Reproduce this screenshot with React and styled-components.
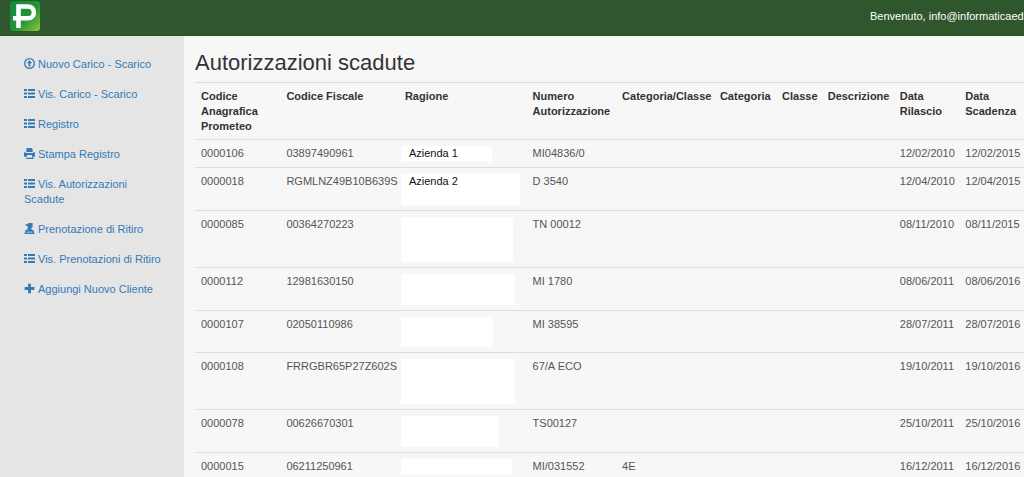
import React from 'react';
import styled, { createGlobalStyle } from 'styled-components';

const GlobalStyle = createGlobalStyle`
  * {
    box-sizing: border-box;
  }
  body {
    margin: 0;
    background: #f7f7f7;
    color: #555;
    font-family: Arial, "Liberation Sans", sans-serif;
    font-size: 11px;
    line-height: 15px;
    overflow: hidden;
  }
`

const Page = styled.div`
  display: flex;
  flex-direction: column;
  min-height: 100vh;
`

const TopBar = styled.header`
  display: flex;
  align-items: center;
  justify-content: space-between;
  height: 36px;
  padding: 0 0 3px 9px;
  background: #30562d;
  border-bottom: 1px solid #2b4d26;
`

const LogoLink = styled.a`
  display: flex;
`

const Greeting = styled.span`
  flex: 0 0 154px;
  overflow: hidden;
  white-space: nowrap;
  color: #fff;
`

const Body = styled.div`
  display: flex;
  flex: 1;
`

const Sidebar = styled.nav`
  flex: 0 0 184px;
  padding: 21px 20px 21px 24px;
  background: #e5e5e5;
`

const MenuList = styled.ul`
  display: flex;
  flex-direction: column;
  gap: 15px;
  margin: 0;
  padding: 0;
  list-style: none;
`

const MenuLink = styled.a`
  color: #337ab7;
  text-decoration: none;
  svg {
    width: 11px;
    height: 11px;
    margin-right: 3px;
    vertical-align: -1px;
    fill: currentColor;
  }
`

const Content = styled.main`
  flex: 1;
  min-width: 0;
  padding: 15px 0 0 11px;
`

const Title = styled.h1`
  margin: 0;
  padding-bottom: 7px;
  color: #333;
  font-size: 22px;
  font-weight: normal;
  line-height: 24px;
`

const Table = styled.table`
  width: 100%;
  table-layout: fixed;
  border-collapse: collapse;
`

const Col = styled.col`
  width: ${(props) => props.$share}%;
`

const HeadCell = styled.th`
  padding: 6px 6px 5px;
  border-top: 1px solid #ddd;
  color: #333;
  text-align: left;
  vertical-align: top;
  white-space: ${(props) => (props.$wrap ? 'normal' : 'nowrap')};
`

const Cell = styled.td`
  padding: 6px 6px 5px;
  border-top: 1px solid #ddd;
  vertical-align: top;
  white-space: nowrap;
`

const Company = styled.div`
  width: ${(props) => props.$width}px;
  height: ${(props) => props.$height}px;
  margin-left: -4px;
  padding-left: 8px;
  background: #fff;
  color: #111;
`

const ICONS = {
  upload: (
    <path fillRule="evenodd" d="M7 0a7 7 0 1 0 0 14A7 7 0 0 0 7 0zm0 1.7a5.3 5.3 0 1 1 0 10.6A5.3 5.3 0 0 1 7 1.7zM7 3L3.6 6.8h2.3V11h2.2V6.8h2.3z" />
  ),
  list: (
    <path d="M0 1.300h3.800v2.500H0zM5.100 1.300H14v2.500H5.100zM0 5.700h3.800v2.500H0zM5.100 5.700H14v2.500H5.100zM0 10.200h3.800v2.500H0zM5.100 10.200H14v2.500H5.100z" />
  ),
  print: (
    <path fillRule="evenodd" d="M4 0h5.5L11 1.5V5H3V1zM1 5h1v1.5h10V5h1l1 1.5V11h-2.5l1 3h-10l1-3H0V6.5zM4 9l-.8 3.5h7.6L10 9z" />
  ),
  save: (
    <path fillRule="evenodd" d="M2 1l2 1 2-2h5v5L9 7l1.5 2H12l1.5 5H.5L2 9h3L3.5 7.500l2-2L2 3zM3 11v1h8v-1z" />
  ),
  plus: <path d="M5.2 .8h3.6v4.4h4.400v3.600H8.800v4.400H5.200V8.800H.8V5.200h4.400z" />,
}

const MENU = [
  { icon: 'upload', label: 'Nuovo Carico - Scarico' },
  { icon: 'list', label: 'Vis. Carico - Scarico' },
  { icon: 'list', label: 'Registro' },
  { icon: 'print', label: 'Stampa Registro' },
  { icon: 'list', label: 'Vis. Autorizzazioni Scadute' },
  { icon: 'save', label: 'Prenotazione di Ritiro' },
  { icon: 'list', label: 'Vis. Prenotazioni di Ritiro' },
  { icon: 'plus', label: 'Aggiungi Nuovo Cliente' },
]

const COLUMNS = [
  { label: 'Codice Anagrafica Prometeo', share: 10.3, wrap: true },
  { label: 'Codice Fiscale', share: 14.3 },
  { label: 'Ragione', share: 15.4 },
  { label: 'Numero Autorizzazione', share: 10.8, wrap: true },
  { label: 'Categoria/Classe', share: 11.8 },
  { label: 'Categoria', share: 7.5 },
  { label: 'Classe', share: 5.5 },
  { label: 'Descrizione', share: 8.7 },
  { label: 'Data Rilascio', share: 7.9, wrap: true },
  { label: 'Data Scadenza', share: 7.8, wrap: true },
]

const ROWS = [
  { id: '0000106', cf: '03897490961', name: 'Azienda 1', width: 91, height: 16, num: 'MI04836/0', from: '12/02/2010', to: '12/02/2015' },
  { id: '0000018', cf: 'RGMLNZ49B10B639S', name: 'Azienda 2', width: 119, height: 31, num: 'D 3540', from: '12/04/2010', to: '12/04/2015' },
  { id: '0000085', cf: '00364270223', width: 112, height: 45, num: 'TN 00012', from: '08/11/2010', to: '08/11/2015' },
  { id: '0000112', cf: '12981630150', width: 114, height: 31, num: 'MI 1780', from: '08/06/2011', to: '08/06/2016' },
  { id: '0000107', cf: '02050110986', width: 92, height: 30, num: 'MI 38595', from: '28/07/2011', to: '28/07/2016' },
  { id: '0000108', cf: 'FRRGBR65P27Z602S', width: 114, height: 45, num: '67/A ECO', from: '19/10/2011', to: '19/10/2016' },
  { id: '0000078', cf: '00626670301', width: 97, height: 31, num: 'TS00127', from: '25/10/2011', to: '25/10/2016' },
  { id: '0000015', cf: '06211250961', width: 111, height: 16, num: 'MI/031552', catClass: '4E', from: '16/12/2011', to: '16/12/2016' },
]

function Logo() {
  return (
    <svg width="31" height="31" viewBox="0 0 31 31" aria-hidden="true">
      <defs>
        <linearGradient id="logoFill" x1="0" y1="0" x2="1" y2="1">
          <stop offset="0" stopColor="#118a3e" />
          <stop offset="0.55" stopColor="#239436" />
          <stop offset="1" stopColor="#8cc63f" />
        </linearGradient>
      </defs>
      <rect x="1" y="0" width="30" height="30" rx="3" fill="url(#logoFill)" />
      <g fill="none" stroke="#fff" strokeWidth="4.6">
        <path d="M9.5 27V5.500H19a5.900 5.900 0 0 1 0 11.800H4" />
      </g>
    </svg>
  )
}

/* menu laterale */
function Menu() {
  return (
    <Sidebar>
      <MenuList>
        {MENU.map((item) => (
          <li key={item.label}>
            <MenuLink href="#">
              <svg viewBox="0 0 14 14" aria-hidden="true">{ICONS[item.icon]}</svg>
              {item.label}
            </MenuLink>
          </li>
        ))}
      </MenuList>
    </Sidebar>
  )
}

/* tabella delle autorizzazioni */
function Authorizations() {
  return (
    <Table>
      <colgroup>
        {COLUMNS.map((col) => <Col key={col.label} $share={col.share} />)}
      </colgroup>
      <thead>
        <tr>
          {COLUMNS.map((col) => (
            <HeadCell key={col.label} $wrap={col.wrap} scope="col">{col.label}</HeadCell>
          ))}
        </tr>
      </thead>
      <tbody>
        {ROWS.map((row) => (
          <tr key={row.id}>
            <Cell>{row.id}</Cell>
            <Cell>{row.cf}</Cell>
            <Cell>
              <Company $width={row.width} $height={row.height}>{row.name}</Company>
            </Cell>
            <Cell>{row.num}</Cell>
            <Cell>{row.catClass}</Cell>
            <Cell />
            <Cell />
            <Cell />
            <Cell>{row.from}</Cell>
            <Cell>{row.to}</Cell>
          </tr>
        ))}
      </tbody>
    </Table>
  )
}

function App() {
  return (
    <Page>
      <GlobalStyle />
      <TopBar>
        <LogoLink href="#" aria-label="Prometeo">
          <Logo />
        </LogoLink>
        <Greeting>Benvenuto, info@informaticaedp</Greeting>
      </TopBar>
      <Body>
        <Menu />
        <Content>
          <Title>Autorizzazioni scadute</Title>
          <Authorizations />
        </Content>
      </Body>
    </Page>
  )
}

export default App;
